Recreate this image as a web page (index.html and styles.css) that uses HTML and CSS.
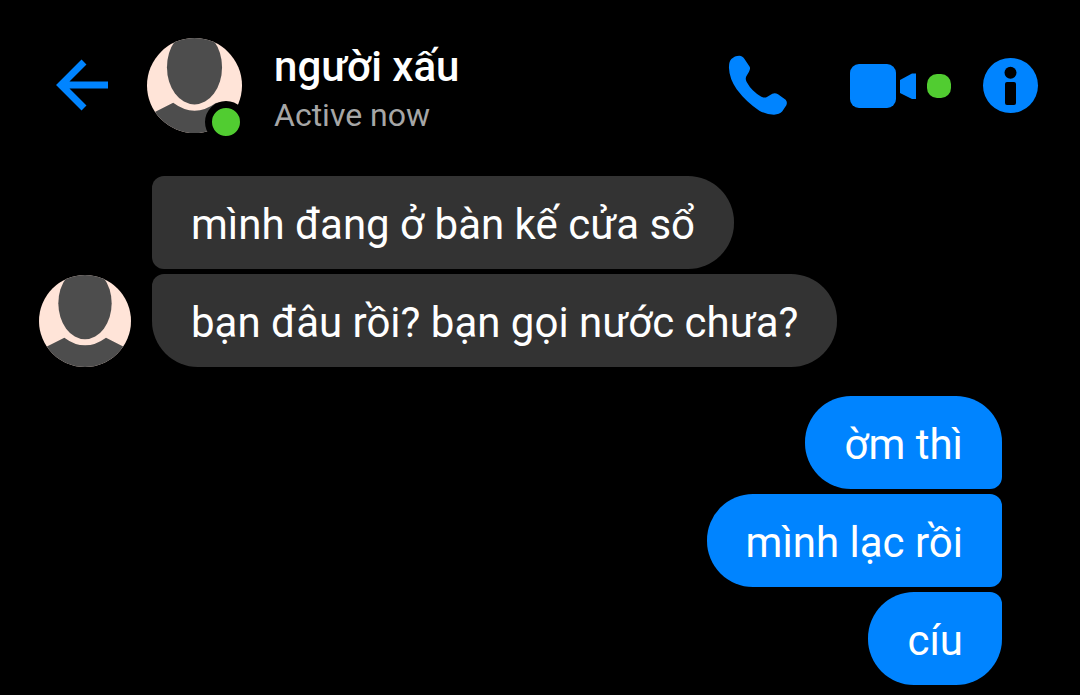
FILE: index.html
```html
<!DOCTYPE html>
<html lang="vi">
<head>
    <meta charset="UTF-8">
    <meta name="viewport" content="width=device-width, initial-scale=1.0">
    <title>người xấu</title>
    <link rel="stylesheet" href="styles.css">
</head>
<body>
    <header class="chat-header">
        <button class="icon-button back" type="button" aria-label="Back">
            <svg width="53" height="52" viewBox="0 0 53 52" fill="none" stroke="currentColor" stroke-width="7">
                <path d="M28 2 L5 25 L28 48 M5 25 H52"/>
            </svg>
        </button>

        <div class="avatar avatar-large">
            <svg class="avatar-image" viewBox="57 330 276 276" aria-hidden="true">
                <rect x="57" y="330" width="276" height="276" fill="#ffe4d8"/>
                <ellipse cx="195" cy="415" rx="80" ry="108" fill="#4d4d4d"/>
                <path d="M50 560 L133 518 Q195 564 258 518 L340 560 V610 H50 Z" fill="#4d4d4d"/>
            </svg>
            <span class="status-dot"></span>
        </div>

        <div class="contact">
            <h1 class="contact-name">người xấu</h1>
            <p class="contact-status">Active now</p>
        </div>

        <div class="actions">
            <button class="icon-button" type="button" aria-label="Call">
                <svg width="60" height="60" viewBox="54 48 180 180" fill="currentColor">
                    <path d="M57 85 Q56 65 64 57 Q74 47 88 47 Q98 47 104 58 L119 80 Q122 86 117 95 L109 109 Q105 117 110 126 Q126 155 154 170 Q164 175 172 170 L187 161 Q196 157 204 163 L227 179 Q233 186 229 196 L217 214 Q208 224 192 224 Q170 224 148 212 Q110 188 80 148 Q58 116 57 85 Z"/>
                </svg>
            </button>
            <button class="icon-button video" type="button" aria-label="Video call">
                <svg width="66" height="44" viewBox="0 0 66 44" fill="currentColor">
                    <rect width="46" height="44" rx="9"/>
                    <path d="M50 16 L62 9.5 H66 V35 H62 L50 29 Z"/>
                </svg>
                <span class="video-dot"></span>
            </button>
            <button class="icon-button" type="button" aria-label="Info">
                <svg width="55" height="55" viewBox="0 0 55 55">
                    <circle cx="27.5" cy="27.5" r="27.5" fill="currentColor"/>
                    <circle cx="27.5" cy="14.7" r="6"/>
                    <rect x="22" y="24" width="11" height="23" rx="2"/>
                </svg>
            </button>
        </div>
    </header>

    <main class="messages">
        <section class="group received">
            <div class="avatar">
                <svg class="avatar-image" viewBox="57 330 276 276" aria-hidden="true">
                    <rect x="57" y="330" width="276" height="276" fill="#ffe4d8"/>
                    <ellipse cx="195" cy="415" rx="80" ry="108" fill="#4d4d4d"/>
                    <path d="M50 560 L133 518 Q195 564 258 518 L340 560 V610 H50 Z" fill="#4d4d4d"/>
                </svg>
            </div>
            <div class="bubbles">
                <p class="bubble">mình đang ở bàn kế cửa sổ</p>
                <p class="bubble last">bạn đâu rồi? bạn gọi nước chưa?</p>
            </div>
        </section>

        <section class="group sent">
            <div class="bubbles">
                <p class="bubble first">ờm thì</p>
                <p class="bubble">mình lạc rồi</p>
                <p class="bubble last">cíu</p>
            </div>
        </section>
    </main>
</body>
</html>
```
FILE: styles.css
```css
* {
    box-sizing: border-box;
}

body {
    margin: 0;
    background-color: #000;
    color: #fff;
    font-family: Roboto, sans-serif;
}

h1, p {
    margin: 0;
}

.chat-header {
    display: flex;
    align-items: center;
    padding: 38px 42px 43px 56px;
}

.icon-button {
    display: flex;
    align-items: center;
    padding: 0;
    border: none;
    background: none;
    color: #0084ff;
    cursor: pointer;
}

.icon-button svg {
    overflow: visible;
}

.back {
    margin-right: 38px;
}

.avatar {
    position: relative;
    flex: none;
    width: 92px;
    height: 92px;
}

.avatar-large {
    width: 95px;
    height: 95px;
}

.avatar-image {
    display: block;
    width: 100%;
    height: 100%;
    border-radius: 50%;
}

.status-dot {
    position: absolute;
    right: -5px;
    bottom: -10px;
    width: 42px;
    height: 42px;
    border: 7px solid #000;
    border-radius: 50%;
    background-color: #51cc31;
}

.contact {
    flex: 1;
    padding: 4px 0 0 32px;
}

.contact-name {
    font-size: 42px;
    font-weight: 500;
    line-height: 50px;
}

.contact-status {
    margin-top: 5px;
    color: #a6a6a6;
    font-size: 32px;
    line-height: 36px;
}

.actions {
    display: flex;
    align-items: center;
}

.video {
    gap: 11px;
    margin: 0 32px 0 62px;
}

.video-dot {
    width: 24px;
    height: 24px;
    border-radius: 10px;
    background-color: #51cc31;
}

.messages {
    padding: 0 78px 10px 39px;
}

.group {
    display: flex;
    align-items: flex-end;
    gap: 21px;
}

.bubbles {
    display: flex;
    flex-direction: column;
    align-items: flex-start;
    gap: 5px;
}

.bubble {
    padding: 24px 39px 20px;
    border-radius: 12px 46px 46px 12px;
    background-color: #333;
    font-size: 42px;
    line-height: 49px;
}

.received .last {
    border-bottom-left-radius: 46px;
}

.sent {
    justify-content: flex-end;
    margin-top: 29px;
}

.sent .bubbles {
    align-items: flex-end;
}

.sent .bubble {
    border-radius: 46px 12px 12px 46px;
    background-color: #0084ff;
}

.sent .first {
    border-top-right-radius: 46px;
}

.sent .last {
    border-bottom-right-radius: 46px;
}
```
